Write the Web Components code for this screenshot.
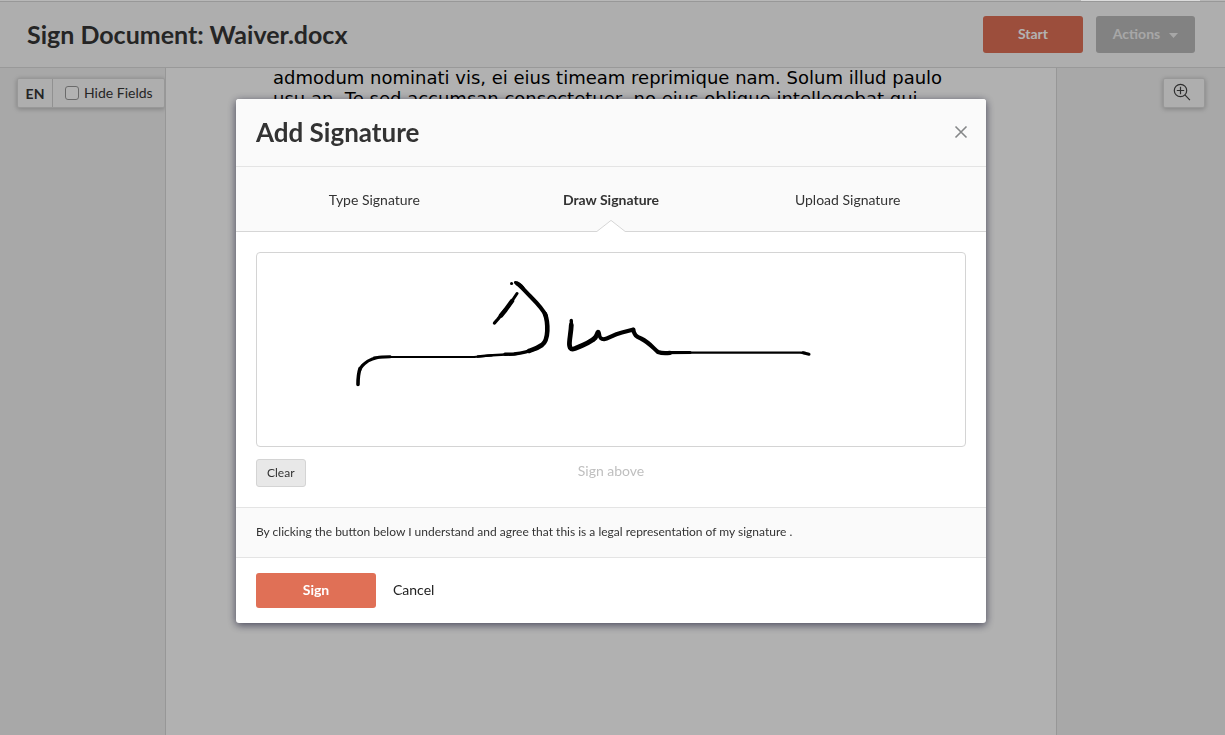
<!DOCTYPE html>
<html lang="en">
<head>
<meta charset="utf-8">
<title>Sign Document: Waiver.docx</title>
<style>
html, body { height: 100%; }
body { margin: 0; font-family: "Lato", "Liberation Sans", sans-serif; font-size: 14px; color: #333; background: #f1f1f1; overflow: hidden; }
</style>
</head>
<body>
<sign-app></sign-app>
<script>
function define(name, html) {
  const t = document.createElement('template');
  t.innerHTML = html;
  customElements.define(name, class extends HTMLElement {
    constructor() {
      super();
      this.attachShadow({ mode: 'open' }).append(t.content.cloneNode(true));
    }
  });
}

define('app-button', `
<style>
:host { display: inline-flex; }
button { flex: 1; display: flex; align-items: center; justify-content: center; gap: 9px; border: 0; border-radius: 3px; font: inherit; font-size: 14px; font-weight: 700; color: #fff; background: #e07056; height: 35px; padding: 0 16px 2px; cursor: pointer; }
:host([size="large"]) button { height: 37px; }
:host([kind="muted"]) button { background: #bababa; color: #f0f0f0; }
:host([kind="text"]) button { background: none; color: #222; font-weight: 400; }
:host([kind="small"]) button { height: 28px; padding: 0 10px 2px; font-size: 12px; font-weight: 400; color: #333; background: #e8e8e8; border: 1px solid #d4d4d4; }
::slotted(svg) { margin-top: 3px; }
</style>
<button type="button"><slot></slot></button>`);

define('page-header', `
<style>
:host { display: flex; align-items: center; gap: 13px; box-sizing: border-box; height: 67px; padding: 0 30px 0 27px; background: #fafafa; border-top: 1px solid #dadada; border-bottom: 1px solid #dcdcdc; }
h1 { flex: 1; margin: 0; padding-bottom: 2px; font-size: 25px; line-height: 28px; font-weight: 700; color: #363636; }
.start { width: 100px; } .actions { width: 99px; }
</style>
<h1><slot></slot></h1>
<app-button class="start" size="large">Start</app-button>
<app-button class="actions" size="large" kind="muted">Actions <svg width="9" height="5" viewBox="0 0 9 5"><path d="M0 0h9L4.500 5z" fill="currentColor"/></svg></app-button>`);

define('field-tools', `
<style>
:host { display: flex; box-sizing: border-box; height: 30px; border: 1px solid #dadada; border-radius: 2px; background: #fafafa; box-shadow: 0 1px 5px rgba(0,0,0,.25); color: #363636; }
b, label { display: flex; align-items: center; }
b { width: 34px; justify-content: center; border-right: 1px solid #d0d0d0; font-size: 14px; }
label { gap: 5px; padding: 0 10px 0 12px; font-size: 14px; }
span { padding-bottom: 2px; }
input { appearance: none; box-sizing: border-box; width: 14px; height: 14px; margin: 0; border: 1px solid #999; border-radius: 3px; background: #fff; }
</style>
<b>EN</b><label><input type="checkbox"><span>Hide Fields</span></label>`);

define('zoom-button', `
<style>
:host { display: block; }
button { display: flex; align-items: center; justify-content: center; width: 42px; height: 30px; padding: 0 4px 2px 0; border: 1px solid #dadada; border-radius: 2px; background: #fafafa; box-shadow: 0 1px 5px rgba(0,0,0,.25); color: #444; }
</style>
<button type="button" aria-label="Zoom in"><svg width="18" height="18" viewBox="0 0 18 18" fill="none" stroke="currentColor" stroke-width="1.200"><circle cx="7.500" cy="7.500" r="6.200"/><path d="M3.800 7.500h7.400M7.500 3.800v7.400M11.900 11.900l5 5.200"/></svg></button>`);

define('document-page', `
<style>
:host { display: block; box-sizing: border-box; width: 892px; background: #fefefe; border: solid #d8d8d8; border-width: 0 1px; padding: 0 107px; overflow: hidden; }
p { margin: -1px 0 0; font: 18px/21px "DejaVu Sans", sans-serif; color: #000; white-space: nowrap; }
</style>
<p><slot></slot></p>`);

define('signature-tabs', `
<style>
:host { display: grid; grid-template-columns: repeat(3, 1fr); height: 64px; padding: 0 20px; background: #fafafa; border-bottom: 1px solid #d6d6d6; }
button { position: relative; border: 0; padding: 0; background: none; font: inherit; font-size: 14px; color: #333; }
button[aria-selected="true"] { font-weight: 700; }
svg { position: absolute; left: calc(50% - 15px); bottom: -1px; }
</style>
<button type="button" role="tab" aria-selected="false">Type Signature</button>
<button type="button" role="tab" aria-selected="true">Draw Signature<svg width="30" height="13" viewBox="0 0 30 13"><path d="M0 13L15 1L30 13z" fill="#fff"/><path d="M0 12.500h.8L15 1.400L29.200 12.500h.8" fill="none" stroke="#d6d6d6"/></svg></button>
<button type="button" role="tab" aria-selected="false">Upload Signature</button>`);

define('signature-pad', `
<style>
:host { display: block; padding: 20px; }
.pad { display: block; box-sizing: border-box; width: 100%; height: 195px; border: 1px solid #d4d4d4; border-radius: 4px; background: #fff; }
.row { display: grid; grid-template-columns: 1fr auto 1fr; margin-top: 12px; }
.row app-button { justify-self: start; }
.hint { color: #bfbfbf; font-size: 14px; line-height: 24px; }
</style>
<svg class="pad" viewBox="257 253 708 193" role="img" aria-label="Drawn signature">
<g fill="none" stroke="#000" stroke-linecap="round" stroke-linejoin="round">
<path stroke-width="3.400" d="M494.500 323L498 319L506 309"/>
<path stroke-width="4.400" d="M501 315.500L505.500 310L512 301"/>
<path stroke-width="3" d="M508 307L517 293.500"/>
<path stroke-width="3" d="M511.500 283.400h.1"/>
<path stroke-width="3.200" d="M515.500 282.500C519 283 521 285 523 288"/>
<path stroke-width="4" d="M517 283.500C521 286 525 291 530 296C538 304 544 311 546 316"/>
<path stroke-width="4.600" d="M545 314C547 319 547.500 325 547.300 331C547 338 546 342 542 345C537 348.500 533 349.500 529 351"/>
<path stroke-width="3.400" d="M536 348.500C529 351.500 522 353 514 354L505 354.300"/>
<path stroke-width="2.600" d="M516 354L488 355.500L478 356.500"/>
<path stroke-width="2.200" d="M492 355.300L474 357H390L374 357.500"/>
<path stroke-width="3" d="M390 356.800C378 357 374 357.500 368 361C363 364.500 360.500 366.500 359.500 371"/>
<path stroke-width="3.600" d="M360 368.500C358.500 373 358 377 358 384.500"/>
<path stroke-width="3.400" d="M571.300 320.500V330"/>
<path stroke-width="4.800" d="M571.300 325C571 333 569 341 569.500 345C570 349.500 572 349.500 575 348.500C584 345 591 342 595.500 337.500"/>
<path stroke-width="4" d="M593 340C597 336 597 331 598.500 332C600 334 598 339 604 339.300C609 338.500 612 335 622 332.500L633.500 329.500"/>
<path stroke-width="4.200" d="M633 330C635 334 634 335.500 641 338.500C650 343 654 349 658 352C662 353.500 665 353.500 670 352.800"/>
<path stroke-width="3.200" d="M662 352.600L690 352.500"/>
<path stroke-width="2.400" d="M684 352.600H800L805 353"/>
<path stroke-width="3" d="M803 352.800L809 354.300"/>
</g></svg>
<div class="row"><app-button kind="small">Clear</app-button><span class="hint">Sign above</span></div>`);

define('signature-dialog', `
<style>
:host { display: block; width: 750px; border-radius: 3px; overflow: hidden; background: #fff; box-shadow: 0 2px 8px rgba(10,10,40,.65); }
header { display: flex; align-items: center; justify-content: space-between; box-sizing: border-box; height: 68px; padding: 0 18px 2px 20px; background: #fafafa; border-bottom: 1px solid #e4e4e4; }
h2 { margin: 0; font-size: 26px; line-height: 28px; font-weight: 700; }
.close { display: flex; border: 0; padding: 0; background: none; color: #858788; }
.terms { margin: 0; padding: 14px 20px 15px; line-height: 20px; font-size: 12px; background: #fafafa; border: solid #e4e4e4; border-width: 1px 0; }
footer { display: flex; gap: 1px; padding: 15px 20px; }
.sign { width: 120px; }
</style>
<header><h2>Add Signature</h2><button class="close" type="button" aria-label="Close"><svg width="14" height="14" viewBox="0 0 14 14"><path d="M1.500 1.500l11 11M12.500 1.500l-11 11" stroke="currentColor" stroke-width="1.600"/></svg></button></header>
<signature-tabs role="tablist"></signature-tabs>
<signature-pad></signature-pad>
<p class="terms">By clicking the button below I understand and agree that this is a legal representation of my signature .</p>
<footer><app-button class="sign">Sign</app-button><app-button kind="text">Cancel</app-button></footer>`);

define('sign-app', `
<style>
:host { display: flex; flex-direction: column; height: 100%; }
.strip { position: relative; z-index: 1; display: flex; justify-content: flex-end; height: 1px; padding-right: 25px; background: #b8b8b8; }
.strip i { width: 119px; background: #dcdcdc; }
main { flex: 1; min-height: 0; display: grid; grid-template-columns: 1fr auto 1fr; padding-right: 3px; }
field-tools { align-self: start; margin: 10px 0 0 17px; }
zoom-button { justify-self: end; margin: 10px 17px 0 0; }
.backdrop { position: fixed; inset: 0; display: flex; justify-content: center; align-items: flex-start; padding: 99px 3px 0 0; background: rgba(0,0,0,.3); }
</style>
<div class="strip"><i></i></div>
<page-header>Sign Document: Waiver.docx</page-header>
<main>
<field-tools></field-tools>
<document-page>admodum nominati vis, ei eius timeam reprimique nam. Solum illud paulo<br>usu an. Te sed accumsan consectetuer, no eius oblique intellegebat qui.</document-page>
<zoom-button></zoom-button>
</main>
<div class="backdrop"><signature-dialog role="dialog" aria-modal="true" aria-label="Add Signature"></signature-dialog></div>`);
</script>
</body>
</html>
